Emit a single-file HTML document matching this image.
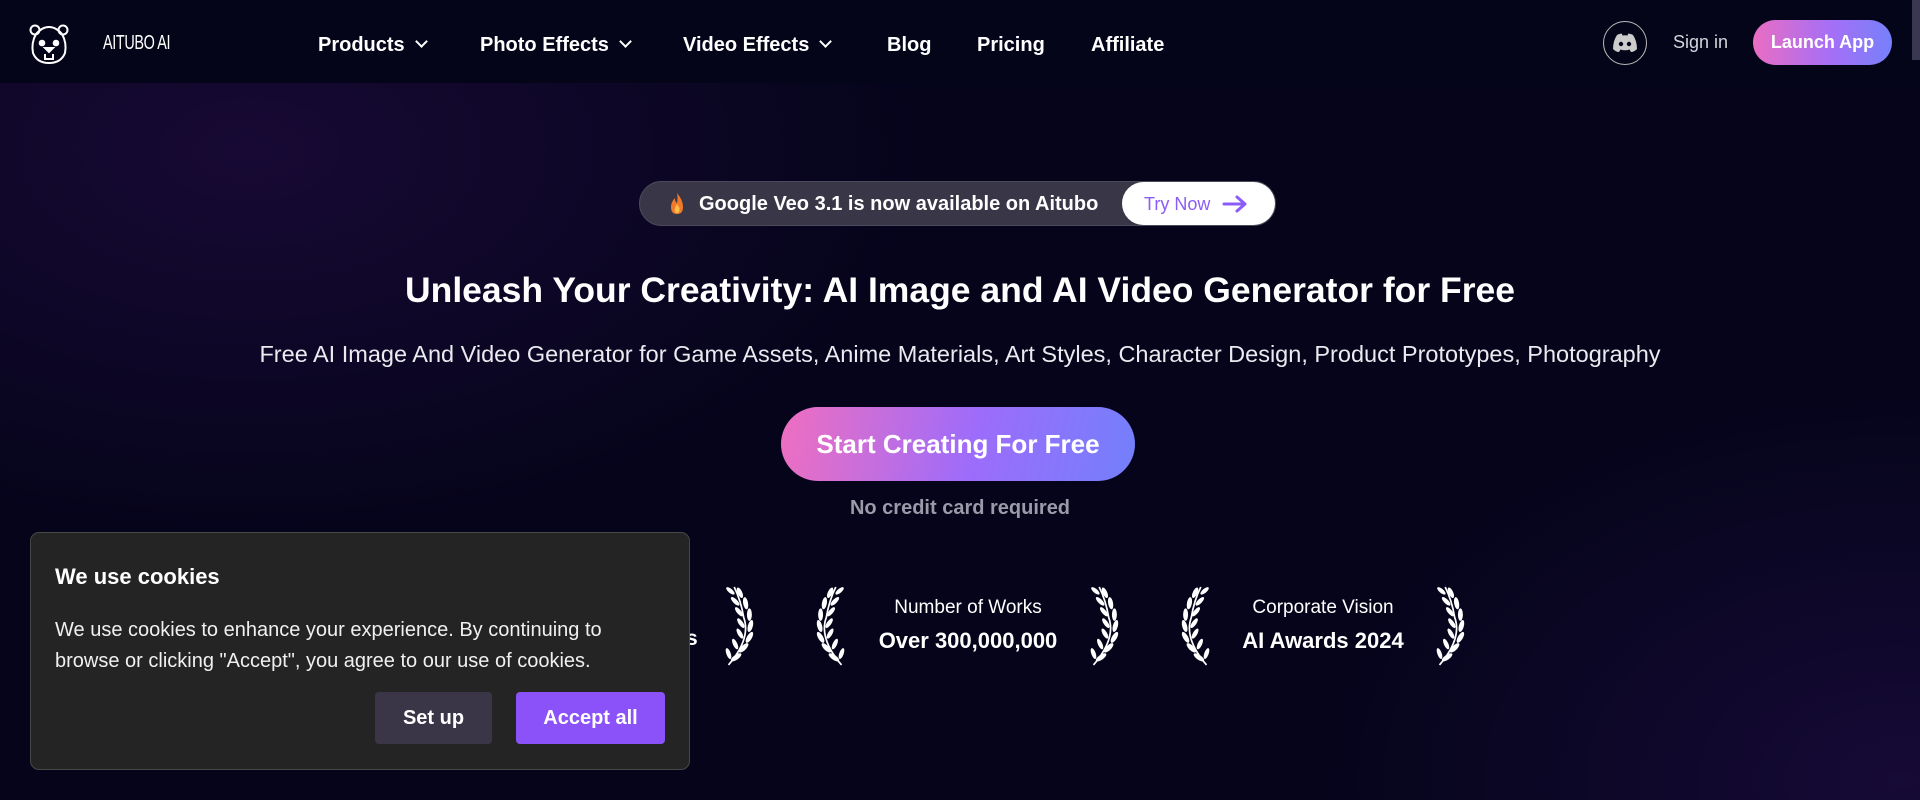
<!DOCTYPE html>
<html><head><meta charset="utf-8"><style>
*{margin:0;padding:0;box-sizing:border-box}
html,body{width:1920px;height:800px;overflow:hidden}
body{font-family:"Liberation Sans",sans-serif;color:#fff;position:relative;
background:radial-gradient(ellipse 700px 400px at 250px 150px,#170934 0%,rgba(23,9,52,0) 100%),
radial-gradient(ellipse 600px 400px at 1900px 780px,#160a36 0%,rgba(22,10,54,0) 100%),#05041a;}
.abs{position:absolute}
nav{position:absolute;left:0;top:0;width:1920px;height:83px;background:#05051a}
.nl{position:absolute;top:34px;font-size:20px;font-weight:bold;color:#fff;white-space:nowrap}
.chev{display:inline-block;width:9px;height:9px;border-right:2px solid #fff;border-bottom:2px solid #fff;transform:rotate(45deg);margin-left:12px;position:relative;top:-5px}
.c{text-align:center;width:1920px;left:0}
.laurel{position:absolute;width:38px;height:86px}
</style></head><body>
<svg width="0" height="0" style="position:absolute">
<defs>
<symbol id="lau" viewBox="0 0 40 90">
<path d="M30 86 Q6 58 14 36 Q17 18 24 4" stroke="#fff" stroke-width="1.8" fill="none"/>
<g fill="#fff">
<ellipse cx="22" cy="78" rx="2.6" ry="6.5" transform="rotate(-55 22 78)"/>
<ellipse cx="30" cy="74" rx="2.3" ry="6" transform="rotate(20 30 74)"/>
<ellipse cx="14" cy="68" rx="2.6" ry="6.5" transform="rotate(-45 14 68)"/>
<ellipse cx="23" cy="64" rx="2.3" ry="6" transform="rotate(25 23 64)"/>
<ellipse cx="8" cy="57" rx="2.6" ry="6.5" transform="rotate(-30 8 57)"/>
<ellipse cx="18" cy="53" rx="2.3" ry="6" transform="rotate(30 18 53)"/>
<ellipse cx="7" cy="45" rx="2.6" ry="6.5" transform="rotate(-15 7 45)"/>
<ellipse cx="17" cy="42" rx="2.3" ry="6" transform="rotate(35 17 42)"/>
<ellipse cx="8" cy="33" rx="2.6" ry="6.5" transform="rotate(0 8 33)"/>
<ellipse cx="19" cy="30" rx="2.3" ry="6" transform="rotate(40 19 30)"/>
<ellipse cx="12" cy="21" rx="2.6" ry="6.5" transform="rotate(10 12 21)"/>
<ellipse cx="23" cy="19" rx="2.3" ry="6" transform="rotate(45 23 19)"/>
<ellipse cx="18" cy="10" rx="2.4" ry="6" transform="rotate(25 18 10)"/>
<ellipse cx="28" cy="8" rx="2.2" ry="5.5" transform="rotate(50 28 8)"/>
</g>
</symbol>
</defs>
</svg>
<nav>
<svg class="abs" style="left:28px;top:23px" width="42" height="42" viewBox="0 0 42 42" fill="none" stroke="#fff" stroke-width="2">
<circle cx="7" cy="7" r="4.5"/><circle cx="35" cy="7" r="4.5"/>
<path d="M8 11 Q3 20 5 30 Q9 40 21 40 Q33 40 37 30 Q39 20 34 11 Q28 4 21 4 Q14 4 8 11Z"/>
<circle cx="14" cy="20" r="2.3" fill="#fff"/><circle cx="28" cy="20" r="2.3" fill="#fff"/>
<path d="M17 25 L25 25 L21 29Z" fill="#fff"/><path d="M17 31 L17 36 L25 36 L25 31"/>
</svg>
<div class="abs" style="left:103px;top:32px;font-size:20px;letter-spacing:-0.5px;transform:scaleX(0.72);transform-origin:left">AITUBO AI</div>
<div class="nl" style="left:318px">Products<span class="chev"></span></div>
<div class="nl" style="left:480px">Photo Effects<span class="chev"></span></div>
<div class="nl" style="left:683px">Video Effects<span class="chev"></span></div>
<div class="nl" style="left:887px">Blog</div>
<div class="nl" style="left:977px">Pricing</div>
<div class="nl" style="left:1091px">Affiliate</div>
<div class="abs" style="left:1603px;top:21px;width:44px;height:44px;border:1.5px solid #bbb;border-radius:50%"></div>
<svg class="abs" style="left:1612px;top:33px" width="26" height="20" viewBox="0 0 26 20"><path d="M5 2 Q9 0 10 1 L10.5 2.5 Q13 2 15.5 2.5 L16 1 Q17 0 21 2 Q25 8 25 16 Q22 19 19 19 L17.5 16.5 Q13 18 8.5 16.5 L7 19 Q4 19 1 16 Q1 8 5 2Z" fill="#ccc"/><circle cx="9" cy="11" r="2.2" fill="#05051a"/><circle cx="17" cy="11" r="2.2" fill="#05051a"/></svg>
<div class="abs" style="left:1673px;top:32px;font-size:18px;color:#d4d4dc">Sign in</div>
<div class="abs" style="left:1753px;top:20px;width:139px;height:45px;border-radius:23px;background:linear-gradient(90deg,#ea6dc3,#a66ff5 55%,#7680fb);font-size:18px;font-weight:bold;text-align:center;line-height:45px">Launch App</div>
</nav>
<div class="abs" style="left:1912px;top:0;width:8px;height:60px;background:#3a3850"></div>

<div class="abs" style="left:639px;top:181px;width:637px;height:45px;border-radius:23px;background:#393747;border:1px solid #4c4a5a"></div>
<svg class="abs" style="left:669px;top:192px" width="16" height="24" viewBox="0 0 16 24"><path d="M8 1 Q14 8 14 15 Q14 22 8 22 Q2 22 2 15 Q2 10 6 6 Q6 10 8 11 Q9 6 8 1Z" fill="#f07a2a"/><path d="M8 12 Q11 16 10.5 18 Q10 21 8 21 Q5.5 21 5.5 18 Q6 15 8 12Z" fill="#ffc04a"/></svg>
<div class="abs" style="left:699px;top:193px;font-size:20px;font-weight:bold;color:#fff">Google Veo 3.1 is now available on Aitubo</div>
<div class="abs" style="left:1122px;top:182px;width:153px;height:43px;border-radius:22px;background:#fff"></div>
<div class="abs" style="left:1144px;top:194px;font-size:18px;color:#8b5cf6">Try Now</div>
<svg class="abs" style="left:1222px;top:194px" width="26" height="20" viewBox="0 0 26 20"><path d="M2 10 H23 M15 3 L23 10 L15 17" stroke="#8b5cf6" stroke-width="3" fill="none" stroke-linecap="round" stroke-linejoin="round"/></svg>

<div class="abs c" style="top:270px;font-size:35.5px;font-weight:bold">Unleash Your Creativity: AI Image and AI Video Generator for Free</div>
<div class="abs c" style="top:341px;font-size:23.5px;color:#eaeaf0">Free AI Image And Video Generator for Game Assets, Anime Materials, Art Styles, Character Design, Product Prototypes, Photography</div>
<div class="abs" style="left:781px;top:407px;width:354px;height:74px;border-radius:37px;background:linear-gradient(100deg,#ef6fc0 0%,#9c6cfb 55%,#7380fb 100%);font-size:26px;font-weight:bold;text-align:center;line-height:74px">Start Creating For Free</div>
<div class="abs c" style="top:497px;font-size:20px;color:#9a9aa8;font-weight:bold">No credit card required</div>

<svg class="laurel" style="left:719px;top:583px;transform:scaleX(-1)"><use href="#lau"/></svg>
<div class="abs" style="left:686px;top:627px;font-size:21px;font-weight:bold">s</div>
<svg class="laurel" style="left:813px;top:583px"><use href="#lau"/></svg>
<svg class="laurel" style="left:1084px;top:583px;transform:scaleX(-1)"><use href="#lau"/></svg>
<div class="abs" style="left:852px;top:597px;width:232px;text-align:center;font-size:19px">Number of Works</div>
<div class="abs" style="left:852px;top:628px;width:232px;text-align:center;font-size:22px;font-weight:bold">Over 300,000,000</div>
<svg class="laurel" style="left:1178px;top:583px"><use href="#lau"/></svg>
<svg class="laurel" style="left:1430px;top:583px;transform:scaleX(-1)"><use href="#lau"/></svg>
<div class="abs" style="left:1216px;top:597px;width:214px;text-align:center;font-size:19px">Corporate Vision</div>
<div class="abs" style="left:1216px;top:628px;width:214px;text-align:center;font-size:22px;font-weight:bold">AI Awards 2024</div>

<div class="abs" style="left:30px;top:532px;width:660px;height:238px;background:#242424;border:1px solid #474747;border-radius:9px">
<div class="abs" style="left:24px;top:31px;font-size:22px;font-weight:bold">We use cookies</div>
<div class="abs" style="left:24px;top:82px;width:575px;font-size:20px;line-height:31px;color:#f0f0f0">We use cookies to enhance your experience. By continuing to browse or clicking "Accept", you agree to our use of cookies.</div>
<div class="abs" style="left:344px;top:159px;width:117px;height:52px;border-radius:4px;background:#3a3648;font-size:20px;font-weight:bold;text-align:center;line-height:52px">Set up</div>
<div class="abs" style="left:485px;top:159px;width:149px;height:52px;border-radius:4px;background:#8b52fa;font-size:20px;font-weight:bold;text-align:center;line-height:52px">Accept all</div>
</div>
</body></html>
